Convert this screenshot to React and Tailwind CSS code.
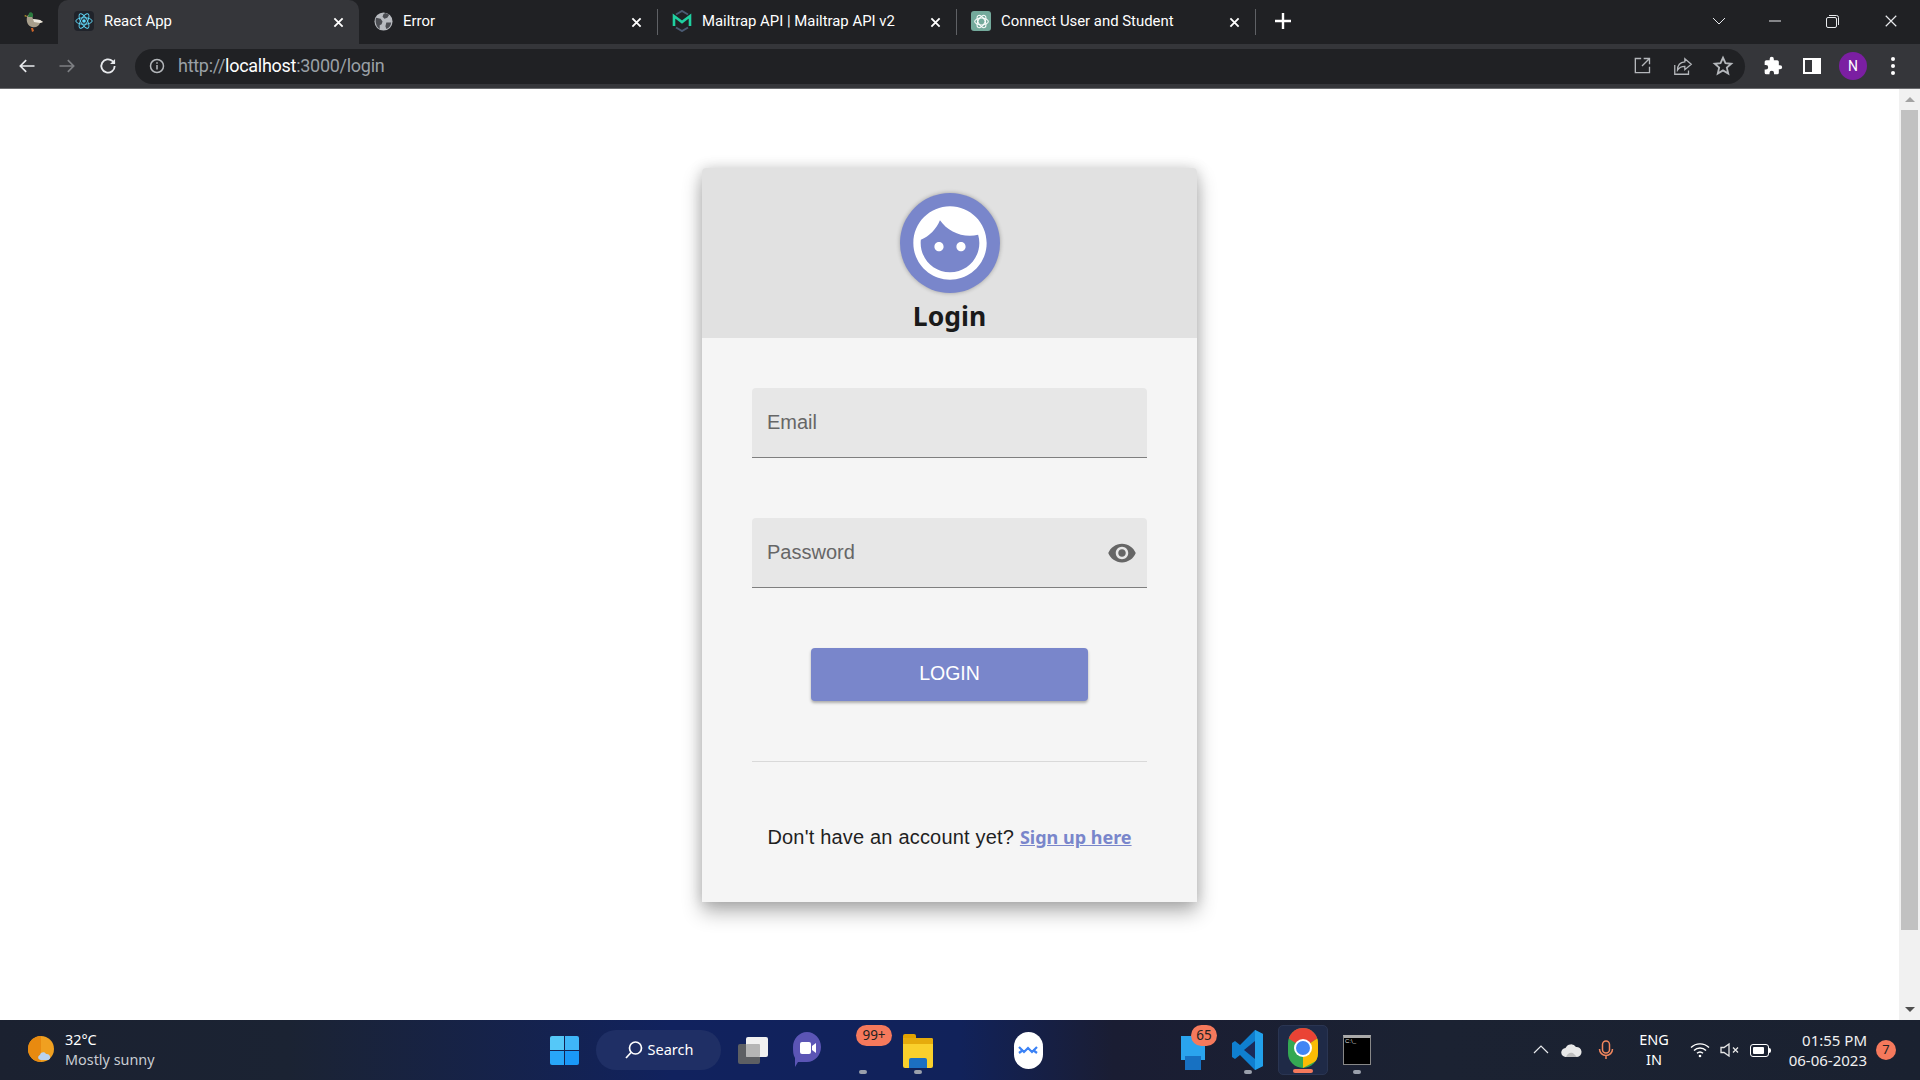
import React from "react";

const ui = { fontFamily: "Roboto, 'Noto Sans', sans-serif" };
const arial = { fontFamily: "'Liberation Sans', Arial, sans-serif" };
const noto = { fontFamily: "'Noto Sans', 'Open Sans', sans-serif" };

function X({ size = 12, color = "#fff", w = 2 }) {
  return (
    <svg width={size} height={size} viewBox="0 0 12 12" className="block shrink-0">
      <path d="M1.5 1.5L10.5 10.5M10.5 1.5L1.5 10.5" stroke={color} strokeWidth={w} fill="none" />
    </svg>
  );
}

function Duck() {
  return (
    <svg width="22" height="24" viewBox="0 0 22 24">
      <path d="M4 7c1-3 4-3 5-1l1 3 7 1 3 2-3 1c-1 3-4 5-8 4-4-1-6-5-5-10z" fill="#a89f8c" />
      <path d="M6 3c1-1 3-1 4 1v3H5z" fill="#2c7a3f" />
      <path d="M10 9l7 1 3 2-3 1-6-1z" fill="#ece8de" />
      <path d="M3 5L1 6l3 1z" fill="#c9a52b" />
      <path d="M8 18l1 4 2-1-1-3z" fill="#d0662a" />
    </svg>
  );
}

function ReactIcon() {
  return (
    <div className="w-[20px] h-[20px] bg-[#20232a] rounded-sm flex items-center justify-center">
      <svg width="20" height="20" viewBox="-11 -11 22 22" fill="none" stroke="#61dafb" strokeWidth="1">
        <circle r="2" fill="#61dafb" stroke="none" />
        <ellipse rx="9" ry="3.6" />
        <ellipse rx="9" ry="3.6" transform="rotate(60)" />
        <ellipse rx="9" ry="3.6" transform="rotate(120)" />
      </svg>
    </div>
  );
}

function Globe() {
  return (
    <svg width="19" height="19" viewBox="0 0 20 20">
      <circle cx="10" cy="10" r="9.5" fill="#b8bbc0" />
      <path d="M2 6l5 1 2 3-1 3-2 1v4C3 16 1 12 2 6zM12 1l4 2-2 3-3 1-2-2 1-3zM13 11l5 0c0 3-2 6-5 7l-1-3z" fill="#4b4d52" />
    </svg>
  );
}

function Mailtrap() {
  return (
    <svg width="20" height="22" viewBox="0 0 20 22" fill="none">
      <path d="M4 4.5L10 1l6 3.5" stroke="#4a5a72" strokeWidth="2" />
      <path d="M4 17.5L10 21l6-3.5" stroke="#4a5a72" strokeWidth="2" />
      <path d="M2 16V6l8 6 8-6v10" stroke="#1fd0a0" strokeWidth="2.6" />
    </svg>
  );
}

function Gpt() {
  return (
    <div className="w-[20px] h-[20px] bg-[#74aa9c] rounded-[3px] flex items-center justify-center">
      <svg width="17" height="17" viewBox="-10 -10 20 20" fill="none" stroke="#fff" strokeWidth="1.2">
        <ellipse rx="8" ry="4" />
        <ellipse rx="8" ry="4" transform="rotate(60)" />
        <ellipse rx="8" ry="4" transform="rotate(120)" />
      </svg>
    </div>
  );
}

function Tab({ icon, title, active, sep }) {
  return (
    <div
      className={
        active
          ? "relative w-[301px] h-[44px] shrink-0 flex items-center pl-[16px] bg-[#35363a] rounded-t-[10px]"
          : "relative w-[299px] h-[44px] shrink-0 flex items-center pl-[14px]"
      }
    >
      <div className="w-[20px] flex justify-center shrink-0 mb-[2px]">{icon}</div>
      <div className="ml-[10px] flex-1 text-[14.9px] text-white whitespace-nowrap mb-[2px]">{title}</div>
      <div className="mr-[15px]"><X size={11} /></div>
      {sep && <div className="w-px h-[26px] bg-[#5f6165] shrink-0" />}
    </div>
  );
}

function Stroke({ children, size = 22, w = 2, color = "#e8eaed", vb = "0 0 24 24" }) {
  return (
    <svg width={size} height={size} viewBox={vb} fill="none" stroke={color} strokeWidth={w} className="block shrink-0">
      {children}
    </svg>
  );
}

function Chrome() {
  return (
    <div className="h-[89px] shrink-0 bg-[#35363a] border-b border-[#6a6b6e]" style={ui}>
      <div className="h-[44px] bg-[#202124] flex items-center">
        <div className="w-[58px] h-[44px] flex items-center justify-center pl-[12px] pr-[2px]"><Duck /></div>
        <Tab active icon={<ReactIcon />} title="React App" />
        <Tab icon={<Globe />} title="Error" sep />
        <Tab icon={<Mailtrap />} title="Mailtrap API | Mailtrap API v2" sep />
        <Tab icon={<Gpt />} title="Connect User and Student" sep />
        <div className="ml-[19px] mb-[2px]">
          <Stroke size={16} w={2.4} color="#fff" vb="0 0 16 16"><path d="M8 0v16M0 8h16" /></Stroke>
        </div>
        <div className="flex-1" />
        <div className="mr-[43px] mb-[2px]">
          <Stroke size={14} w={1} vb="0 0 14 14"><path d="M1 4l6 6 6-6" /></Stroke>
        </div>
        <div className="mr-[45px] mb-[2px]">
          <Stroke size={12} w={1} vb="0 0 12 12"><path d="M0 6h12" /></Stroke>
        </div>
        <div className="mr-[45px] mb-[2px]">
          <Stroke size={13} w={1} vb="0 0 13 13"><rect x="0.5" y="2.5" width="10" height="10" rx="1.5" /><path d="M3 .5h7.5a2 2 0 0 1 2 2V10" /></Stroke>
        </div>
        <div className="mr-[22px] mb-[2px]"><X size={14} color="#e8eaed" w={1} /></div>
      </div>
      <div className="h-[44px] flex items-center">
        <div className="w-[135px] flex items-center shrink-0 pl-[17px]">
          <Stroke size={20} w={2} color="#e8eaed"><path d="M21 12H4M11 5l-7 7 7 7" /></Stroke>
          <div className="ml-[20px]"><Stroke size={20} w={2} color="#7d7f83"><path d="M3 12h17M13 5l7 7-7 7" /></Stroke></div>
          <div className="ml-[21px]"><Stroke size={20} w={2.2} color="#e8eaed"><path d="M20 12a8 8 0 1 1-2.5-5.8L20 8.5" /><path d="M20.5 3.5v6h-6z" fill="#e8eaed" stroke="none" /></Stroke></div>
        </div>
        <div className="w-[1610px] h-[35px] bg-[#202124] rounded-full flex items-center pl-[14px] pr-[11px]">
          <svg width="16" height="16" viewBox="0 0 16 16" fill="none" stroke="#b4b7bb" strokeWidth="1.5" className="shrink-0">
            <circle cx="8" cy="8" r="6.5" />
            <path d="M8 7v4.5M8 4.2v1.6" />
          </svg>
          <div className="ml-[13px] mb-[1px] text-[18px] tracking-[-0.28px] text-[#9aa0a6] whitespace-nowrap">
            http://<span className="text-white">localhost</span>:3000/login
          </div>
          <div className="flex-1" />
          <Stroke size={20} w={1.6} color="#b4b7bb"><path d="M11 3H4v17h17v-7" /><path d="M21 3l-9 9M14 3h7v7" /></Stroke>
          <div className="ml-[20px]"><Stroke size={22} w={1.4} color="#b4b7bb"><path d="M3 11v10h15v-4" /><path d="M14 4l7 6-7 6v-3.5c-4 0-6 1-8 4 0-5 3-8.500 8-9z" /></Stroke></div>
          <div className="ml-[18px]"><Stroke size={22} w={2} color="#b4b7bb"><path d="M12 3l2.700 6 6.300.6-4.800 4.200 1.500 6.400-5.700-3.400-5.700 3.400 1.500-6.400L3 9.600 9.300 9z" /></Stroke></div>
        </div>
        <div className="ml-[18px]">
          <svg width="20" height="20" viewBox="0 0 24 24" fill="#fff" className="block">
            <path d="M20.500 11H19V7a2 2 0 0 0-2-2h-4V3.500a2.500 2.500 0 0 0-5 0V5H4a2 2 0 0 0-2 2v3.800h1.500a2.700 2.700 0 0 1 0 5.400H2V20a2 2 0 0 0 2 2h3.800v-1.500a2.700 2.700 0 0 1 5.400 0V22H17a2 2 0 0 0 2-2v-4h1.500a2.500 2.500 0 0 0 0-5z" />
          </svg>
        </div>
        <div className="ml-[20px] w-[18px] h-[16px] border-2 border-white flex justify-end">
          <div className="w-[7px] bg-white" />
        </div>
        <div className="ml-[18px] w-[28px] h-[28px] rounded-full bg-[#7b1fa2] text-white text-[14px] flex items-center justify-center">N</div>
        <div className="ml-[24px] flex flex-col gap-[3px]">
          <div className="w-[4px] h-[4px] rounded-full bg-white" />
          <div className="w-[4px] h-[4px] rounded-full bg-white" />
          <div className="w-[4px] h-[4px] rounded-full bg-white" />
        </div>
      </div>
    </div>
  );
}

function Field({ label, eye }) {
  return (
    <div className="h-[70px] bg-[#e7e7e7] rounded-t-[4px] border-b border-[#7f7f7f] flex items-center pl-[15px] pr-[10px] pb-[2px]">
      <div className="flex-1 text-[20px] text-[#666666]" style={arial}>{label}</div>
      {eye && (
        <svg width="30" height="30" viewBox="0 0 24 24" fill="#666666" className="block mt-[2px]">
          <path d="M12 4.500C7 4.500 2.730 7.610 1 12c1.730 4.390 6 7.500 11 7.500s9.270-3.110 11-7.500c-1.730-4.390-6-7.500-11-7.500zM12 17c-2.760 0-5-2.240-5-5s2.240-5 5-5 5 2.240 5 5-2.240 5-5 5zm0-8c-1.660 0-3 1.340-3 3s1.340 3 3 3 3-1.340 3-3-1.340-3-3-3z" />
        </svg>
      )}
    </div>
  );
}

function Card() {
  return (
    <div className="mt-[79px] mx-auto w-[495px] h-[734px] bg-[#f5f5f5] rounded-t-[4px] shadow-[0_10px_20px_rgba(0,0,0,0.3),0_0_14px_rgba(0,0,0,0.15)]">
      <div className="h-[170px] bg-[#e1e1e1] rounded-t-[4px] flex flex-col items-center pt-[25px]">
        <div className="w-[100px] h-[100px] rounded-full bg-[#7986cb] flex items-center justify-center shadow-[0_0_4px_rgba(0,0,0,0.3)]">
          <svg width="88" height="88" viewBox="0 0 24 24" fill="#ffffff" className="block">
            <path d="M9 11.750c-.690 0-1.250.560-1.250 1.250s.560 1.250 1.250 1.250 1.250-.560 1.250-1.250-.560-1.250-1.250-1.250zm6 0c-.690 0-1.250.560-1.250 1.250s.560 1.250 1.250 1.250 1.250-.560 1.250-1.250-.560-1.250-1.250-1.250zM12 2C6.480 2 2 6.480 2 12s4.480 10 10 10 10-4.480 10-10S17.520 2 12 2zm0 18c-4.410 0-8-3.590-8-8 0-.290.020-.580.050-.860 2.360-1.050 4.230-2.980 5.210-5.370C11.070 8.330 14.050 10 17.420 10c.780 0 1.530-.090 2.250-.26.210.710.330 1.470.330 2.260 0 4.410-3.590 8-8 8z" />
          </svg>
        </div>
        <div className="mt-[3px] text-[26.5px] leading-[40px] font-bold text-[#1a1a1a]" style={noto}>Login</div>
      </div>
      <div className="px-[50px] pt-[50px]">
        <Field label="Email" />
        <div className="mt-[60px]"><Field label="Password" eye /></div>
        <div className="mt-[60px] flex justify-center">
          <div className="w-[277px] h-[53px] rounded-[4px] bg-[#7986cb] text-white text-[19.5px] flex items-center justify-center pb-[1px] shadow-[0_2px_3px_rgba(0,0,0,0.3)]" style={arial}>LOGIN</div>
        </div>
        <div className="mt-[60px] h-px bg-[#d9d9d9]" />
        <div className="mt-[60px] text-center text-[20px] leading-[30px] tracking-[0.19px] whitespace-nowrap text-[#1f1f1f]" style={arial}>
          Don't have an account yet?{" "}
          <span className="text-[#7986cb] font-bold underline text-[18px] tracking-normal" style={noto}>Sign up here</span>
        </div>
      </div>
    </div>
  );
}

function Scrollbar() {
  return (
    <div className="w-[21px] shrink-0 bg-[#f1f1f1] flex flex-col items-center">
      <div className="h-[21px] flex items-center justify-center shrink-0">
        <div className="w-0 h-0 border-x-[5px] border-x-transparent border-b-[5px] border-b-[#a3a3a3]" />
      </div>
      <div className="w-[17px] h-[820px] bg-[#c1c1c1] shrink-0" />
      <div className="flex-1" />
      <div className="h-[21px] flex items-center justify-center shrink-0">
        <div className="w-0 h-0 border-x-[5px] border-x-transparent border-t-[5px] border-t-[#505050]" />
      </div>
    </div>
  );
}

function Weather() {
  return (
    <svg width="30" height="30" viewBox="0 0 30 30">
      <circle cx="14" cy="14" r="13" fill="#f0a020" />
      <path d="M14 1a13 13 0 0 0 0 26z" fill="#e88a10" />
      <path d="M14 25c-3 0-4-4-1-5 0-3 5-4 6-1 4-1 6 5 2 6z" fill="#b9d3f2" />
    </svg>
  );
}

function Dot({ w = 8, color = "#9aa0ac" }) {
  return <div className="h-[4px] rounded-full mx-auto" style={{ width: w, background: color }} />;
}

function TaskIcon({ children, dot, width = 40, ml = 0, badge, dotW, dotColor, bg }) {
  return (
    <div
      className={"relative h-[50px] flex flex-col items-center justify-center shrink-0 rounded-[5px] " + (bg ? "bg-[#1f2a47] border border-[#2a3552]" : "")}
      style={{ width, marginLeft: ml }}
    >
      {children}
      {badge}
      <div className="absolute bottom-[1px] left-0 right-0">{dot && <Dot w={dotW} color={dotColor} />}</div>
    </div>
  );
}

function Taskbar() {
  return (
    <div className="h-[60px] shrink-0 flex items-center bg-[linear-gradient(90deg,#1b2130_0%,#1b2333_15%,#11225e_35%,#11225a_50%,#1a1d33_58%,#1b2232_75%,#1a2130_100%)] text-white" style={noto}>
      <div className="ml-[27px] w-[30px]"><Weather /></div>
      <div className="ml-[8px] w-[110px] text-[14.4px] leading-[20px] whitespace-nowrap">
        <div>32°C</div>
        <div className="text-[#c9ccd2]">Mostly sunny</div>
      </div>
      <div className="ml-[375px] w-[29px] h-[29px] grid grid-cols-2 gap-[1px] shrink-0">
        <div className="bg-[#55c8f8] rounded-tl-[2px]" />
        <div className="bg-[#3fb6f8] rounded-tr-[2px]" />
        <div className="bg-[#28a6f8] rounded-bl-[2px]" />
        <div className="bg-[#1a98f8] rounded-br-[2px]" />
      </div>
      <div className="ml-[17px] w-[125px] h-[40px] rounded-full bg-[#1f2f65] flex items-center justify-center shrink-0">
        <svg width="20" height="20" viewBox="0 0 20 20" fill="none" stroke="#fff" strokeWidth="1.7" className="block">
          <circle cx="11.500" cy="8" r="6" />
          <path d="M7 12.500L2 18" />
        </svg>
        <div className="ml-[4px] text-[14.5px]">Search</div>
      </div>
      <TaskIcon ml={12}>
        <div className="relative w-[30px] h-[27px]">
          <div className="absolute left-0 bottom-0 w-[22px] h-[20px] bg-[#5d5f63] rounded-[2px]" />
          <div className="absolute right-0 top-0 w-[22px] h-[20px] bg-[#f0f0f0] rounded-[2px]" />
          <div className="absolute left-[8px] top-[7px] w-[14px] h-[13px] bg-[#b5b5b5] rounded-[1px]" />
        </div>
      </TaskIcon>
      <TaskIcon ml={14}>
        <svg width="30" height="38" viewBox="0 0 30 38">
          <path d="M15 1c8 0 14 7 14 15s-6 15-14 15H6l-3 5v-9C1 24 1 20 1 16 1 8 7 1 15 1z" fill="#5b55b5" />
          <rect x="8" y="11" width="11" height="12" rx="2" fill="#fff" />
          <path d="M20 15l4-3v10l-4-3z" fill="#fff" />
        </svg>
      </TaskIcon>
      <TaskIcon ml={16} dot dotW={8} badge={
        <div className="absolute top-0 left-[13px] w-[36px] h-[21px] rounded-full bg-[#f5795c] text-[#222] text-[13.5px] flex items-center justify-center">99+</div>
      } />
      <TaskIcon ml={15} dot dotW={8}>
        <div className="relative w-[30px] h-[34px] mt-[2px]">
          <div className="absolute top-0 left-0 w-[13px] h-[8px] bg-[#e2a200] rounded-t-[2px]" />
          <div className="absolute top-[4px] left-0 w-[30px] h-[30px] bg-[#fad02c] rounded-[2px]" />
          <div className="absolute top-[4px] left-0 w-[30px] h-[6px] bg-[#e6ab0c] rounded-t-[2px]" />
          <div className="absolute bottom-0 left-[6px] w-[18px] h-[10px] bg-[#1c6fc2] rounded-t-[2px]" />
        </div>
      </TaskIcon>
      <TaskIcon ml={70}>
        <div className="w-[29px] h-[37px] rounded-full bg-white flex items-center justify-center">
          <svg width="20" height="12" viewBox="0 0 20 12" fill="none" stroke="#3b82f6" strokeWidth="2.2">
            <path d="M1 3l5 5 4-4 4 4 5-5" />
            <path d="M1 9l4-3M19 9l-4-3" />
          </svg>
        </div>
      </TaskIcon>
      <TaskIcon ml={125} badge={
        <div className="absolute top-0 left-[18px] w-[26px] h-[21px] rounded-full bg-[#f5795c] text-[#222] text-[13.5px] flex items-center justify-center">65</div>
      }>
        <div className="mt-[6px] w-[24px] h-[34px] relative">
          <div className="absolute inset-x-0 top-0 h-[24px] bg-[#2aa4ee]" />
          <div className="absolute left-[4px] right-[4px] top-[20px] h-[14px] bg-[#1771c2]" />
        </div>
      </TaskIcon>
      <TaskIcon ml={15} dot dotW={8}>
        <svg width="32" height="42" viewBox="0 0 32 42">
          <path d="M23 1l8 4v32l-8 4L8 26l-5 4-3-2v-14l3-2 5 4z" fill="#0f7fcf" />
          <path d="M23 1l8 4v32l-8 4z" fill="#22a0ea" />
          <path d="M23 12L12 21l11 9z" fill="#1b2a58" />
        </svg>
      </TaskIcon>
      <TaskIcon ml={10} width={50} bg dot dotW={20} dotColor="#f5795c">
        <div className="w-[30px] h-[40px] mb-[5px] rounded-full relative overflow-hidden bg-[#34a853]">
          <svg width="30" height="40" viewBox="0 0 30 40" className="block">
            <path d="M15 20L0 10V0h30v10z" fill="#ea4335" />
            <path d="M15 20L30 10v22L15 40z" fill="#fbbc05" />
            <circle cx="15" cy="20" r="9" fill="#fff" />
            <circle cx="15" cy="20" r="7" fill="#4285f4" />
          </svg>
        </div>
      </TaskIcon>
      <TaskIcon ml={9} dot dotW={8}>
        <div className="w-[28px] h-[30px] bg-black border border-[#888] border-t-[3px] border-t-[#aaa] text-[6px] leading-[6px] text-[#ddd] pl-[1px]" style={arial}>C:\_</div>
      </TaskIcon>
      <div className="flex-1" />
      <Stroke size={16} w={1.2} vb="0 0 16 16"><path d="M1 11l7-7 7 7" /></Stroke>
      <div className="ml-[12px]">
        <svg width="21" height="14" viewBox="0 0 21 14" className="block">
          <path d="M5 14a4.500 4.500 0 0 1-.5-9A6 6 0 0 1 15 4a5 5 0 0 1 1 10z" fill="#e8e8e8" />
          <path d="M5 14c2-5 6-5 8-3l3 3z" fill="#bdbdbd" />
        </svg>
      </div>
      <div className="ml-[14px]">
        <Stroke size={20} w={1.5} color="#f2875e" vb="0 0 20 20">
          <rect x="6.500" y="1" width="7" height="12" rx="3.500" />
          <path d="M3.500 9a6.500 6.500 0 0 0 13 0M10 15.500V19" />
        </Stroke>
      </div>
      <div className="ml-[20px] w-[36px] text-center text-[14.5px] leading-[20px] mb-[2px]">
        <div>ENG</div>
        <div>IN</div>
      </div>
      <div className="ml-[18px]">
        <svg width="20" height="16" viewBox="0 0 20 16" fill="none" stroke="#fff" strokeWidth="1.4" className="block">
          <path d="M1 5.500a13 13 0 0 1 18 0M4 8.500a8.500 8.500 0 0 1 12 0M7 11.300a4.500 4.500 0 0 1 6 0" />
          <circle cx="10" cy="14" r="1.300" fill="#fff" stroke="none" />
        </svg>
      </div>
      <div className="ml-[10px]">
        <svg width="20" height="16" viewBox="0 0 20 16" fill="none" stroke="#e8e8e8" strokeWidth="1.3" className="block">
          <path d="M1 5.500h3L9 2v12L4 10.500H1z" />
          <path d="M13 5.500l5 5M18 5.500l-5 5" />
        </svg>
      </div>
      <div className="ml-[10px] relative w-[19px] h-[13px] rounded-[3px] border border-white p-[2px]">
        <div className="w-[11px] h-full bg-white rounded-[1px]" />
        <div className="absolute right-[-3px] top-[3px] w-[2px] h-[5px] bg-white rounded-r" />
      </div>
      <div className="ml-[10px] w-[88px] text-right text-[15px] leading-[20px] whitespace-nowrap shrink-0 text-[#f0f0f0]">
        <div>01:55 PM</div>
        <div>06-06-2023</div>
      </div>
      <div className="ml-[9px] mr-[24px] w-[20px] h-[20px] rounded-full bg-[#f5795c] text-[#222] text-[13px] flex items-center justify-center shrink-0">7</div>
    </div>
  );
}

export default function App() {
  return (
    <div className="w-[1920px] h-[1080px] overflow-hidden flex flex-col bg-white">
      <Chrome />
      <div className="flex-1 flex min-h-0">
        <div className="flex-1 min-w-0">
          <Card />
        </div>
        <Scrollbar />
      </div>
      <Taskbar />
    </div>
  );
}
